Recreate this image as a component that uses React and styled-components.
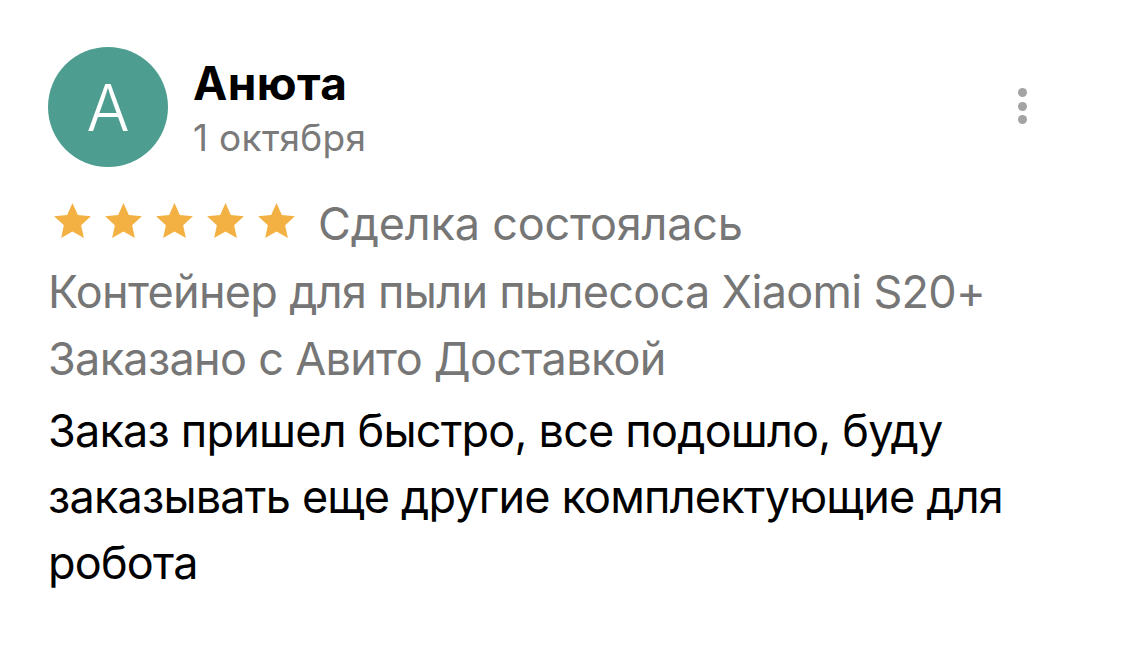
import React from "react";
import styled, { createGlobalStyle } from "styled-components";

const GlobalStyle = createGlobalStyle`
  html, body {
    margin: 0;
    padding: 0;
    background: #ffffff;
  }
  body {
    font-family: Inter, "Noto Sans", "Liberation Sans", sans-serif;
    -webkit-font-smoothing: antialiased;
  }
`;

const Card = styled.article`
  width: 1125px;
  box-sizing: border-box;
  padding: 47px 48px 40px 48px;
  color: #000;
`;

const Header = styled.header`
  display: flex;
  align-items: flex-start;
  gap: 25px;
`;

const Avatar = styled.div`
  flex: none;
  width: 120px;
  height: 120px;
  border-radius: 50%;
  background: #4d9d91;
  color: #fff;
  display: flex;
  align-items: center;
  justify-content: center;
  font-size: 64px;
  font-weight: 300;
  line-height: 1;
  padding-top: 2px;
  box-sizing: border-box;
`;

const Who = styled.div`
  flex: 1;
  display: flex;
  flex-direction: column;
  padding-top: 10px;
`;

const Name = styled.div`
  font-size: 46px;
  font-weight: 700;
  line-height: 52px;
  letter-spacing: 0.4px;
`;

const DateText = styled.div`
  margin-top: 7px;
  font-size: 37px;
  font-weight: 400;
  line-height: 44px;
  color: #7a7a7a;
  letter-spacing: 0.3px;
`;

const MoreButton = styled.button`
  flex: none;
  margin: 41px 50px 0 0;
  padding: 0;
  border: 0;
  background: none;
  display: flex;
  flex-direction: column;
  gap: 4.5px;
`;

const Dot = styled.span`
  width: 9px;
  height: 9px;
  border-radius: 50%;
  background: #a3a3a3;
`;

const RatingRow = styled.div`
  display: flex;
  align-items: flex-start;
  margin-top: 29px;
  height: 56px;
`;

const Stars = styled.div`
  display: flex;
  gap: 14px;
  margin: 7px 23px 0 6px;
`;

const Status = styled.span`
  font-size: 45px;
  line-height: 56px;
  color: #767676;
  letter-spacing: -0.2px;
`;

const Meta = styled.div`
  margin-top: ${(p) => p.$gap || 0}px;
  font-size: 45px;
  line-height: 67px;
  color: #767676;
  letter-spacing: -0.7px;
`;

const Body = styled.p`
  margin: 6px 0 0 0;
  max-width: 1010px;
  font-size: 45px;
  line-height: 66px;
  color: #000;
  letter-spacing: -0.8px;
`;

const Star = () => (
  <svg width="37" height="35" viewBox="0 0 37 35.2" aria-hidden="true">
    <path
      d="M18.5 0L23.87 12.06 37 13.44 27.19 22.27 29.94 35.19 18.5 28.59 7.06 35.19 9.81 22.27 0 13.44 13.13 12.06Z"
      fill="#f4b143"
    />
  </svg>
);

export default function App() {
  return (
    <>
      <GlobalStyle />
      <Card>
        <Header>
          <Avatar>A</Avatar>
          <Who>
            <Name>Анюта</Name>
            <DateText>1 октября</DateText>
          </Who>
          <MoreButton aria-label="Ещё">
            <Dot />
            <Dot />
            <Dot />
          </MoreButton>
        </Header>
        <RatingRow>
          <Stars>
            {[0, 1, 2, 3, 4].map((i) => (
              <Star key={i} />
            ))}
          </Stars>
          <Status>Сделка состоялась</Status>
        </RatingRow>
        <Meta $gap={6}>Контейнер для пыли пылесоса Xiaomi S20+</Meta>
        <Meta>Заказано с Авито Доставкой</Meta>
        <Body>
          Заказ пришел быстро, все подошло, буду заказывать еще другие
          комплектующие для робота
        </Body>
      </Card>
    </>
  );
}
